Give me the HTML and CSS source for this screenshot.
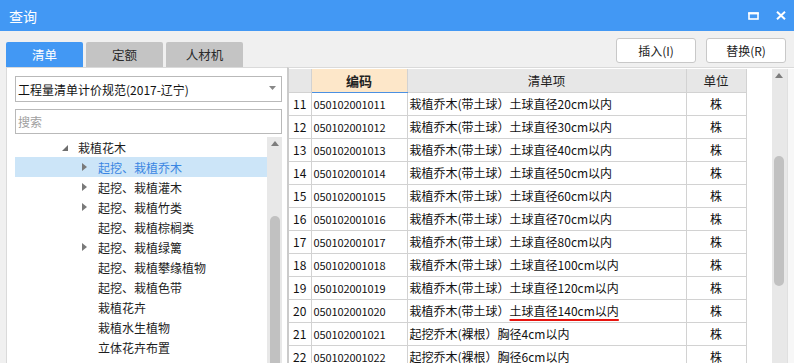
FILE: index.html
```html
<!DOCTYPE html>
<html lang="zh">
<head>
<meta charset="utf-8">
<title>查询</title>
<link rel="stylesheet" href="styles.css">
</head>
<body>
<div class="window">
  <div class="titlebar">
    <span class="title">查询</span>
    <div class="win-ctrls">
      <svg class="ico-max" width="11" height="8" viewBox="0 0 11 8"><rect x="1" y="1.25" width="9" height="5.75" fill="none" stroke="#fff" stroke-width="1.6"/><rect x="0.2" y="0.2" width="10.6" height="2.2" fill="#fff"/></svg>
      <svg class="ico-close" width="10" height="9" viewBox="0 0 10 9"><path d="M1 0.8 L9 8.2 M9 0.8 L1 8.2" stroke="#fff" stroke-width="2"/></svg>
    </div>
  </div>

  <div class="toolbar">
    <div class="tabs">
      <div class="tab active">清单</div>
      <div class="tab">定额</div>
      <div class="tab">人材机</div>
    </div>
    <div class="buttons">
      <button class="btn">插入(I)</button>
      <button class="btn">替换(R)</button>
    </div>
  </div>

  <div class="content">
    <div class="left-panel">
      <div class="select">
        <span>工程量清单计价规范(2017-辽宁)</span>
        <svg class="caret" width="7" height="4" viewBox="0 0 7 4"><path d="M0 0 L7 0 L3.5 4 Z" fill="#888"/></svg>
      </div>
      <div class="search">搜索</div>
      <div class="tree-wrap">
        <ul class="tree">
          <li class="node lvl1"><svg class="tri-open" width="6" height="6" viewBox="0 0 6 6"><path d="M6 0 L6 6 L0 6 Z" fill="#6e6e6e"/></svg><span>栽植花木</span></li>
          <li class="node lvl2 selected"><svg class="tri" width="5" height="8" viewBox="0 0 5 8"><path d="M0 0 L5 4 L0 8 Z" fill="#7a7a7a"/></svg><span>起挖、栽植乔木</span></li>
          <li class="node lvl2"><svg class="tri" width="5" height="8" viewBox="0 0 5 8"><path d="M0 0 L5 4 L0 8 Z" fill="#7a7a7a"/></svg><span>起挖、栽植灌木</span></li>
          <li class="node lvl2"><svg class="tri" width="5" height="8" viewBox="0 0 5 8"><path d="M0 0 L5 4 L0 8 Z" fill="#7a7a7a"/></svg><span>起挖、栽植竹类</span></li>
          <li class="node lvl2"><i class="tri-space"></i><span>起挖、栽植棕榈类</span></li>
          <li class="node lvl2"><svg class="tri" width="5" height="8" viewBox="0 0 5 8"><path d="M0 0 L5 4 L0 8 Z" fill="#7a7a7a"/></svg><span>起挖、栽植绿篱</span></li>
          <li class="node lvl2"><i class="tri-space"></i><span>起挖、栽植攀缘植物</span></li>
          <li class="node lvl2"><i class="tri-space"></i><span>起挖、栽植色带</span></li>
          <li class="node lvl2"><i class="tri-space"></i><span>栽植花卉</span></li>
          <li class="node lvl2"><i class="tri-space"></i><span>栽植水生植物</span></li>
          <li class="node lvl2"><i class="tri-space"></i><span>立体花卉布置</span></li>
        </ul>
        <div class="vscroll tree-scroll">
          <svg class="arrow-up" width="8" height="5" viewBox="0 0 8 5"><path d="M0 5 L4 0 L8 5 Z" fill="#7d7d7d"/></svg>
          <div class="thumb tree-thumb"></div>
        </div>
      </div>
    </div>

    <div class="right-panel">
      <table class="grid">
        <colgroup>
          <col class="c-no"><col class="c-code"><col class="c-item"><col class="c-unit">
        </colgroup>
        <thead>
          <tr>
            <th></th>
            <th class="h-code">编码</th>
            <th>清单项</th>
            <th>单位</th>
          </tr>
        </thead>
        <tbody>
          <tr><td class="no">11</td><td class="code">050102001011</td><td class="item">栽植乔木(带土球）土球直径20cm以内</td><td class="unit">株</td></tr>
          <tr><td class="no">12</td><td class="code">050102001012</td><td class="item">栽植乔木(带土球）土球直径30cm以内</td><td class="unit">株</td></tr>
          <tr><td class="no">13</td><td class="code">050102001013</td><td class="item">栽植乔木(带土球）土球直径40cm以内</td><td class="unit">株</td></tr>
          <tr><td class="no">14</td><td class="code">050102001014</td><td class="item">栽植乔木(带土球）土球直径50cm以内</td><td class="unit">株</td></tr>
          <tr><td class="no">15</td><td class="code">050102001015</td><td class="item">栽植乔木(带土球）土球直径60cm以内</td><td class="unit">株</td></tr>
          <tr><td class="no">16</td><td class="code">050102001016</td><td class="item">栽植乔木(带土球）土球直径70cm以内</td><td class="unit">株</td></tr>
          <tr><td class="no">17</td><td class="code">050102001017</td><td class="item">栽植乔木(带土球）土球直径80cm以内</td><td class="unit">株</td></tr>
          <tr><td class="no">18</td><td class="code">050102001018</td><td class="item">栽植乔木(带土球）土球直径100cm以内</td><td class="unit">株</td></tr>
          <tr><td class="no">19</td><td class="code">050102001019</td><td class="item">栽植乔木(带土球）土球直径120cm以内</td><td class="unit">株</td></tr>
          <tr><td class="no">20</td><td class="code">050102001020</td><td class="item">栽植乔木(带土球）<span class="mark">土球直径140cm以内</span></td><td class="unit">株</td></tr>
          <tr><td class="no">21</td><td class="code">050102001021</td><td class="item">起挖乔木(裸根）胸径4cm以内</td><td class="unit">株</td></tr>
          <tr><td class="no">22</td><td class="code">050102001022</td><td class="item">起挖乔木(裸根）胸径6cm以内</td><td class="unit">株</td></tr>
        </tbody>
      </table>
      <div class="grid-fill"></div>
      <div class="vscroll grid-scroll">
        <svg class="arrow-up" width="8" height="5" viewBox="0 0 8 5"><path d="M0 5 L4 0 L8 5 Z" fill="#7d7d7d"/></svg>
        <div class="thumb grid-thumb"></div>
      </div>
      <div class="edge"></div>
    </div>
  </div>
</div>
</body>
</html>
```

FILE: styles.css
```css
* { box-sizing: border-box; }
html, body {
  margin: 0;
  padding: 0;
}
body {
  width: 794px;
  height: 363px;
  overflow: hidden;
  background: #f0f0f0;
  font-family: "Noto Sans CJK SC", "Noto Sans", sans-serif;
  font-size: 12px;
  color: #1e1e1e;
}
.window {
  display: flex;
  flex-direction: column;
  height: 363px;
}

/* Title bar */
.titlebar {
  height: 31px;
  flex: none;
  background: #4298f4;
  display: flex;
  align-items: center;
  justify-content: space-between;
  padding: 0 8px 0 9px;
}
.title {
  color: #fff;
  font-size: 14px;
  line-height: 1;
}
.win-ctrls {
  display: flex;
  align-items: center;
  gap: 17px;
  padding-right: 0;
}
.ico-max { display: block; margin-top: 0; }
.ico-close { display: block; }

/* Toolbar with tabs and buttons */
.toolbar {
  height: 36px;
  flex: none;
  display: flex;
  justify-content: space-between;
  padding: 0 8px 0 6px;
}
.tabs {
  display: flex;
  align-items: flex-end;
  gap: 3px;
}
.tab {
  width: 77px;
  height: 25px;
  background: #c4c4c4;
  border-radius: 2px 2px 0 0;
  color: #2a2a2a;
  font-size: 12.5px;
  display: flex;
  align-items: center;
  justify-content: center;
}
.tab.active {
  background: #4298f4;
  color: #fff;
}
.buttons {
  display: flex;
  gap: 10px;
  padding-top: 7px;
}
.btn {
  width: 80px;
  height: 25px;
  background: #fff;
  border: 1px solid #c8c8c8;
  border-radius: 3px;
  font-family: inherit;
  font-size: 12px;
  color: #222;
  padding: 0;
}

/* Content area */
.content {
  flex: 1;
  display: flex;
  min-height: 0;
  padding-left: 6px;
}
.left-panel {
  width: 281px;
  flex: none;
  background: #fff;
  border-left: 1px solid #dadada;
  border-top: 1px solid #dadada;
  padding: 8px 5px 0 8px;
  display: flex;
  flex-direction: column;
}
.select {
  height: 26px;
  border: 1px solid #b9b9b9;
  display: flex;
  align-items: center;
  justify-content: space-between;
  padding: 0 5px 0 2px;
  font-size: 12px;
  color: #111;
}
.caret { display: block; margin-top: -2px; }
.search {
  margin-top: 7px;
  height: 25px;
  border: 1px solid #b9b9b9;
  display: flex;
  align-items: center;
  padding-left: 2px;
  color: #a0a0a0;
  font-size: 12px;
}
.tree-wrap {
  margin-top: 3px;
  flex: 1;
  display: flex;
  min-height: 0;
}
.tree {
  list-style: none;
  margin: 0;
  padding: 0;
  flex: 1;
}
.node {
  height: 20px;
  display: flex;
  align-items: center;
  color: #1e1e1e;
  font-size: 12px;
}
.node.lvl1 { padding-left: 47px; }
.node.lvl1 .tri-open { margin-right: 10px; margin-top: 1px; }
.node.lvl2 { padding-left: 67px; }
.tri { margin-right: 11px; flex: none; }
.tri-space { display: inline-block; width: 16px; flex: none; }
.node.selected {
  background: #cce5f8;
  color: #3a86e2;
}
.vscroll {
  width: 15px;
  flex: none;
  background: #e8e8e8;
  position: relative;
  display: flex;
  flex-direction: column;
  align-items: center;
}
.arrow-up { display: block; margin-top: 4px; }
.thumb {
  width: 10px;
  background: #c1c1c1;
  border-radius: 5px 5px 0 0;
}
.tree-thumb {
  margin-top: 70px;
  flex: 1;
}

/* Right panel */
.right-panel {
  flex: 1;
  display: flex;
  align-items: flex-start;
  background: #fff;
  border-left: 2px solid #cbcbcb;
  border-top: 1px solid #dadada;
  padding-top: 1px;
  min-width: 0;
  overflow: hidden;
}
.grid {
  border-collapse: collapse;
  table-layout: fixed;
  width: 457px;
  flex: none;
}
.c-no { width: 22px; }
.c-code { width: 96px; }
.c-item { width: 279px; }
.c-unit { width: 60px; }
.grid th {
  height: 23px;
  background: #e7e7e7;
  border: 1px solid #d2d2d2;
  border-top: none;
  font-weight: normal;
  font-size: 12.5px;
  color: #1e1e1e;
  padding: 0;
}
.grid th:first-child { border-left: none; }
.grid th.h-code {
  background: #fde7c9;
  font-weight: bold;
  color: #222;
  font-size: 13px;
  border-bottom: 1px solid #4a90e2;
}
.grid td {
  height: 23px;
  border: 1px solid #d2d2d2;
  padding: 0 0 0 2px;
  white-space: nowrap;
  overflow: hidden;
  font-size: 12px;
  color: #111;
}
.grid td.no {
  border-left: none;
  text-align: center;
  padding: 0;
  font-size: 12px;
}
.grid td.code {
  font-size: 11px;
  letter-spacing: -0.1px;
}
.grid td.unit {
  text-align: center;
  padding: 0;
}
.mark {
  text-decoration: underline;
  text-decoration-color: #e8140e;
  text-decoration-thickness: 2px;
  text-underline-offset: 3px;
}
.grid-fill {
  width: 25px;
  flex: none;
}
.grid-scroll {
  align-self: stretch;
  margin-top: 0;
}
.grid-thumb {
  margin-top: 78px;
  height: 130px;
  border-radius: 5px;
}
.edge {
  flex: 1;
  align-self: stretch;
  background: #f7f7f7;
  border-left: 1px solid #e0e0e0;
}
```
